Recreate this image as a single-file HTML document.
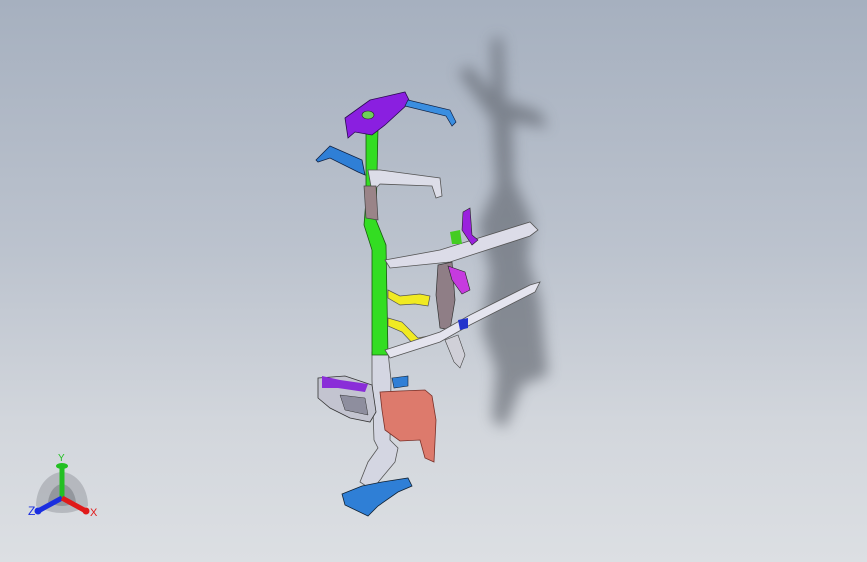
<!DOCTYPE html>
<html><head><style>
html,body{margin:0;padding:0;width:867px;height:562px;overflow:hidden}
body{background:linear-gradient(#a6b0bf 0%,#bcc3ce 45%,#d2d6dc 75%,#dcdfe3 100%)}
svg{position:absolute;left:0;top:0}
</style></head><body>
<svg width="867" height="562" viewBox="0 0 867 562">
<defs>
<filter id="b" x="-50%" y="-50%" width="200%" height="200%"><feGaussianBlur stdDeviation="7"/></filter>
</defs>
<g filter="url(#b)" fill="#5a5f68" opacity="0.6">
<path d="M492 38 L502 38 L506 100 L540 112 L548 128 L512 122 L514 180 L532 220 L528 260 L540 300 L548 375 L522 385 L505 428 L492 420 L496 370 L482 330 L490 270 L478 225 L496 185 L492 120 L458 72 L470 66 L492 92Z"/>
</g>
<!-- lower column -->
<path d="M372 352 L388 352 L391 380 L390 440 L398 448 L395 462 L380 480 L372 490 L360 482 L368 462 L378 448 L374 440 L372 380Z" fill="#d4d6e2" stroke="#555" stroke-width="0.8"/>
<!-- base blue -->
<path d="M342 494 L362 486 L382 482 L408 478 L412 486 L398 492 L378 506 L368 516 L345 505Z" fill="#2f7fd6" stroke="#123" stroke-width="0.8"/>
<!-- red part -->
<path d="M380 392 L400 391 L425 390 L432 396 L436 420 L434 462 L425 458 L420 440 L400 441 L385 430 L382 410Z" fill="#dd7a6c" stroke="#7a3028" stroke-width="0.8"/>
<!-- left cluster -->
<path d="M318 378 L345 376 L372 385 L376 412 L370 422 L350 418 L330 408 L318 398Z" fill="#c3c4d0" stroke="#333" stroke-width="0.8"/>
<path d="M322 376 L340 380 L368 384 L365 392 L338 388 L322 388Z" fill="#8a2ed8"/>
<path d="M340 395 L365 398 L368 415 L345 410Z" fill="#8e8e9e" stroke="#333" stroke-width="0.5"/>
<path d="M392 378 L408 376 L408 386 L394 388Z" fill="#2f7fd6" stroke="#123" stroke-width="0.6"/>
<!-- green column -->
<path d="M366 128 L378 128 L376 220 L386 245 L388 355 L372 355 L372 250 L364 225 L366 200Z" fill="#33dd22" stroke="#1a5a10" stroke-width="0.8"/>
<!-- top purple plate -->
<path d="M345 118 L370 100 L405 92 L410 102 L385 125 L372 135 L355 132 L348 138Z" fill="#8a1fe0" stroke="#2a0a50" stroke-width="0.8"/>
<ellipse cx="368" cy="115" rx="6" ry="4" fill="#6fd05a" stroke="#222" stroke-width="0.6"/>
<path d="M408 100 L450 110 L456 122 L452 126 L446 116 L405 106Z" fill="#3a8ee0" stroke="#124" stroke-width="0.7"/>
<!-- left blue arm -->
<path d="M316 160 L330 146 L362 160 L365 175 L358 172 L330 158 L318 162Z" fill="#2f7fd6" stroke="#124" stroke-width="0.8"/>
<!-- white arm upper -->
<path d="M368 170 L380 170 L440 178 L442 196 L436 198 L432 186 L380 184 L372 192Z" fill="#dcdde8" stroke="#555" stroke-width="0.8"/>
<path d="M364 186 L376 186 L378 220 L366 218Z" fill="#9a8488" stroke="#444" stroke-width="0.7"/>
<!-- mid white arm -->
<path d="M385 260 L440 250 L530 222 L538 230 L530 236 L450 262 L390 268Z" fill="#dcdce8" stroke="#555" stroke-width="0.8"/>
<path d="M463 212 L470 208 L472 235 L478 240 L472 245 L462 230Z" fill="#9a22dd" stroke="#222" stroke-width="0.6"/>
<path d="M450 232 L460 230 L462 244 L452 244Z" fill="#44cc22"/>
<path d="M438 265 L452 262 L455 300 L450 330 L440 328 L436 295Z" fill="#8f7e86" stroke="#333" stroke-width="0.7"/>
<path d="M448 266 L465 272 L470 290 L462 294 L452 280Z" fill="#c63adf" stroke="#222" stroke-width="0.6"/>
<!-- yellow parts -->
<path d="M388 290 L400 296 L420 294 L430 296 L428 306 L415 304 L400 305 L388 298Z" fill="#f0ea22" stroke="#555" stroke-width="0.7"/>
<path d="M388 318 L402 322 L418 338 L428 336 L428 346 L415 346 L402 332 L388 326Z" fill="#f0ea22" stroke="#555" stroke-width="0.7"/>
<!-- lower white arm -->
<path d="M385 350 L440 332 L470 315 L530 285 L540 282 L535 292 L470 325 L440 342 L390 358Z" fill="#e4e4ee" stroke="#555" stroke-width="0.8"/>
<path d="M445 340 L458 335 L465 355 L460 368 L454 362Z" fill="#d0d0d8" stroke="#444" stroke-width="0.6"/>
<path d="M458 320 L468 318 L468 328 L460 330Z" fill="#2233cc"/>
<!-- triad -->
<g transform="translate(62,498)">
<path d="M-26 8 A27 34 0 0 1 0 -26 A27 34 0 0 1 26 8 Q0 22 -26 8Z" fill="#9ea2a8" opacity="0.6"/>
<path d="M-14 4 A15 22 0 0 1 0 -14 A15 22 0 0 1 14 4 Q0 12 -14 4Z" fill="#7d8187" opacity="0.6"/>
<line x1="0" y1="0" x2="0" y2="-30" stroke="#22c022" stroke-width="5"/>
<ellipse cx="0" cy="-32" rx="6" ry="3" fill="#22c022"/>
<line x1="0" y1="0" x2="-22" y2="12" stroke="#1a2ee0" stroke-width="5"/>
<circle cx="-24" cy="13" r="3.5" fill="#1a2ee0"/>
<line x1="0" y1="0" x2="22" y2="12" stroke="#e01a1a" stroke-width="5"/>
<circle cx="24" cy="13" r="3.5" fill="#e01a1a"/>
<text x="-4" y="-37" font-family="Liberation Sans,sans-serif" font-size="10" fill="#22c022">Y</text>
<text x="-34" y="17" font-family="Liberation Sans,sans-serif" font-size="12" fill="#1a2ee0">Z</text>
<text x="28" y="18" font-family="Liberation Sans,sans-serif" font-size="11" fill="#e01a1a">X</text>
</g>
</svg>
</body></html>
